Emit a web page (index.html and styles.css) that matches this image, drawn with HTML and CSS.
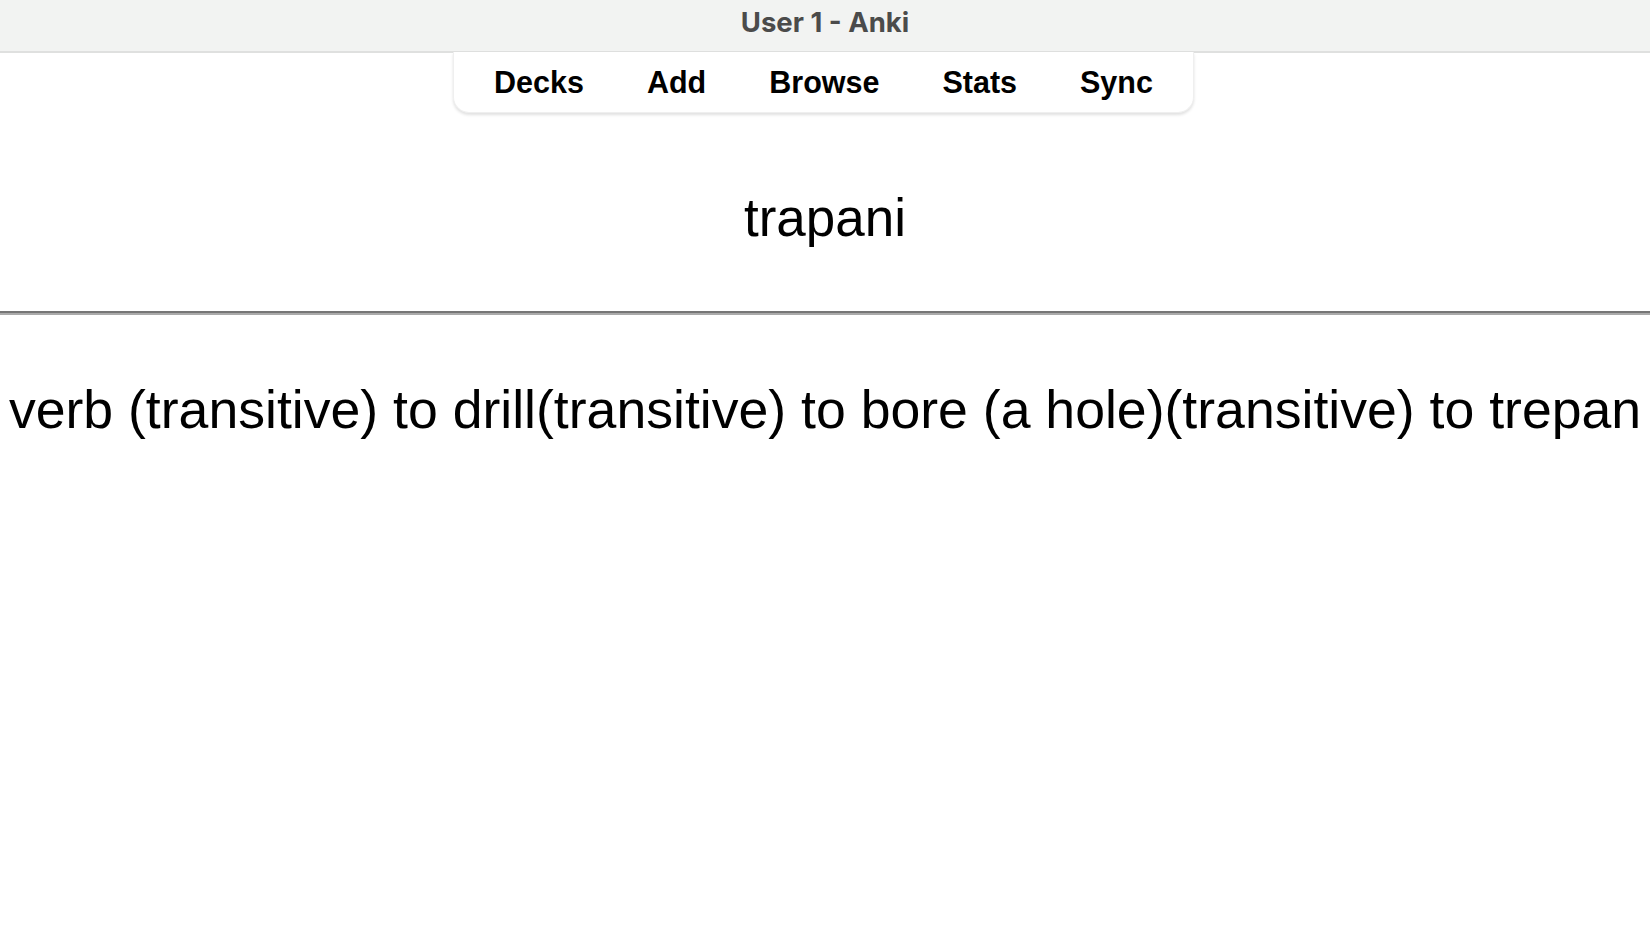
FILE: index.html
```html
<!DOCTYPE html>
<html lang="en">
<head>
  <meta charset="UTF-8">
  <meta name="viewport" content="width=device-width, initial-scale=1.0">
  <title>User 1 - Anki</title>
  <link rel="stylesheet" href="styles.css">
</head>
<body>
  <div class="titlebar">User 1 - Anki</div>
  <div class="toolbar">
    <nav class="nav">
      <a href="#">Decks</a>
      <a href="#">Add</a>
      <a href="#">Browse</a>
      <a href="#">Stats</a>
      <a href="#">Sync</a>
    </nav>
  </div>
  <div class="card">
    <div class="front">trapani</div>
    <hr class="answer">
    <div class="back">verb (transitive) to drill(transitive) to bore (a hole)(transitive) to trepan</div>
  </div>
</body>
</html>
```

FILE: styles.css
```css
body {
  margin: 0;
  padding: 0;
  background: #fff;
  font-family: "Liberation Sans", Arial, sans-serif;
  color: #000;
  overflow: hidden;
}
.titlebar {
  height: 51px;
  line-height: 44px;
  background: #f2f3f2;
  border-bottom: 2px solid #dfe0df;
  text-align: center;
  font-family: "Inter", "Liberation Sans", sans-serif;
  font-weight: 700;
  font-size: 27.5px;
  color: #4b4b4b;
}
.toolbar {
  display: flex;
  justify-content: center;
  margin-top: -1px;
}
.nav {
  display: flex;
  gap: 63px;
  padding: 15px 40px;
  margin-left: -3px;
  background: #fff;
  border: 1px solid #efefef;
  border-top: none;
  border-radius: 0 0 16px 16px;
  box-shadow: 0 2px 3px rgba(0, 0, 0, 0.12);
}
.nav a {
  font-size: 30.5px;
  line-height: 30px;
  font-weight: bold;
  color: #000;
  text-decoration: none;
}
.card {
  text-align: center;
  font-size: 53px;
  line-height: 60px;
}
.front {
  margin-top: 75px;
}
.answer {
  margin: 63px 0 0;
  height: 0;
  border: none;
  border-top: 2px solid #767676;
  border-bottom: 2px solid #aaaaaa;
}
.back {
  margin: 64px -60px 0;
  font-size: 53.6px;
  white-space: nowrap;
}
```
